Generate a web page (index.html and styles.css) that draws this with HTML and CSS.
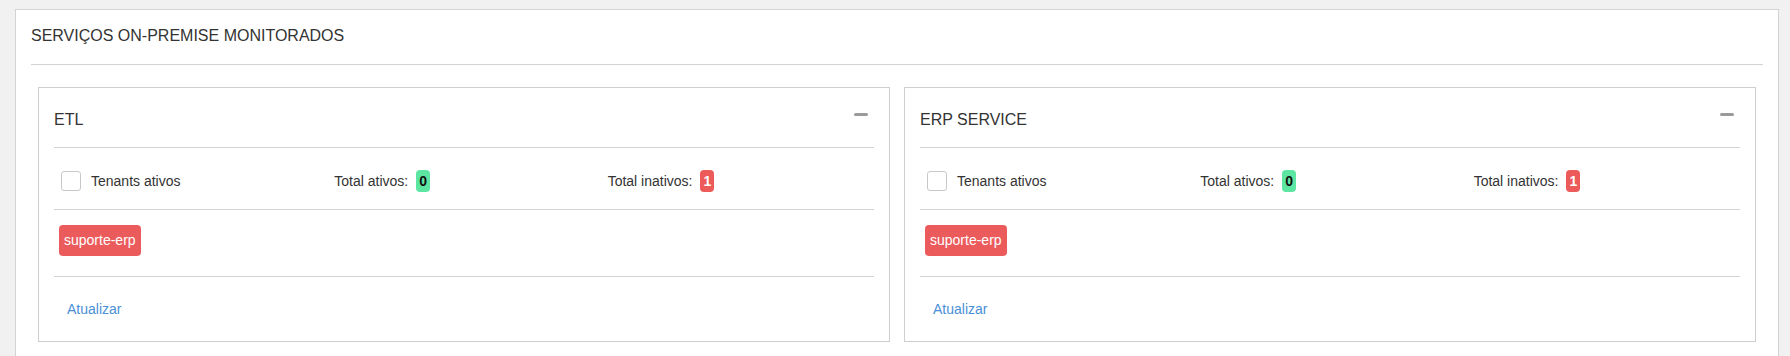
FILE: index.html
```html
<!DOCTYPE html>
<html lang="pt-BR">
<head>
<meta charset="utf-8">
<title>Serviços on-premise monitorados</title>
<link rel="stylesheet" href="styles.css">
</head>
<body>
<section class="panel">
  <header class="panel-header">SERVIÇOS ON-PREMISE MONITORADOS</header>
  <div class="cards">
    <article class="card">
      <div class="card-header">
        <h2 class="card-title">ETL</h2>
        <span class="collapse-btn" aria-label="Recolher"></span>
      </div>
      <div class="card-stats">
        <label class="stat-col"><span class="checkbox"></span><span class="check-label">Tenants ativos</span></label>
        <div class="stat-col">Total ativos:<span class="badge badge-green">0</span></div>
        <div class="stat-col">Total inativos:<span class="badge badge-red">1</span></div>
      </div>
      <div class="card-tags">
        <span class="tag">suporte-erp</span>
      </div>
      <div class="card-footer">
        <a class="link" href="#">Atualizar</a>
      </div>
    </article>
    <article class="card">
      <div class="card-header">
        <h2 class="card-title">ERP SERVICE</h2>
        <span class="collapse-btn" aria-label="Recolher"></span>
      </div>
      <div class="card-stats">
        <label class="stat-col"><span class="checkbox"></span><span class="check-label">Tenants ativos</span></label>
        <div class="stat-col">Total ativos:<span class="badge badge-green">0</span></div>
        <div class="stat-col">Total inativos:<span class="badge badge-red">1</span></div>
      </div>
      <div class="card-tags">
        <span class="tag">suporte-erp</span>
      </div>
      <div class="card-footer">
        <a class="link" href="#">Atualizar</a>
      </div>
    </article>
  </div>
</section>
</body>
</html>
```

FILE: styles.css
```css
* { box-sizing: border-box; }

html, body {
  margin: 0;
  padding: 0;
  background: #f1f1f1;
  font-family: "Liberation Sans", Arial, sans-serif;
  color: #333333;
  overflow: hidden;
}

.panel {
  margin: 9px 0 0 15px;
  width: 1764px;
  height: 400px;
  background: #ffffff;
  border: 1px solid #d3d3d3;
  padding: 0 15px;
}

.panel-header {
  font-size: 16px;
  line-height: 18px;
  padding: 17px 0 19px;
  border-bottom: 1px solid #d3d3d3;
}

.cards {
  display: flex;
  gap: 14px;
  padding: 0 7px;
  margin-top: 22px;
}

.card {
  flex: 1 1 0;
  border: 1px solid #cfcfcf;
  padding: 0 15px;
  background: #ffffff;
}

.card-header {
  display: flex;
  justify-content: space-between;
  align-items: flex-start;
  padding: 23px 0 18px;
  border-bottom: 1px solid #d3d3d3;
}

.card-title {
  margin: 0;
  font-size: 16px;
  line-height: 18px;
  font-weight: normal;
  color: #333333;
}

.collapse-btn {
  display: block;
  width: 14px;
  height: 3px;
  margin: 2px 6px 0 0;
  border-radius: 2px;
  background: #9a9a9a;
}

.card-stats {
  display: grid;
  grid-template-columns: repeat(3, 1fr);
  align-items: center;
  padding: 22px 0 17px;
  border-bottom: 1px solid #d3d3d3;
  font-size: 14px;
  line-height: 22px;
}

.stat-col {
  display: flex;
  align-items: center;
  padding-left: 7px;
}

.checkbox {
  display: block;
  width: 20px;
  height: 20px;
  border: 1px solid #c8c8c8;
  border-radius: 3px;
  background: #ffffff;
  margin-right: 10px;
}

.badge {
  display: inline-block;
  min-width: 14px;
  height: 22px;
  margin-left: 8px;
  padding: 0 3px;
  border-radius: 4px;
  font-size: 14px;
  font-weight: bold;
  line-height: 22px;
  text-align: center;
}

.badge-green {
  background: #5de6a2;
  color: #111111;
}

.badge-red {
  background: #ec5a5a;
  color: #ffffff;
}

.card-tags {
  padding: 15px 0 20px 5px;
  border-bottom: 1px solid #d3d3d3;
}

.tag {
  display: inline-block;
  height: 31px;
  padding: 0 5px;
  border-radius: 4px;
  background: #ec5b5b;
  color: #ffffff;
  font-size: 14px;
  line-height: 31px;
}

.card-footer {
  padding: 22px 0 22px 13px;
  font-size: 14px;
  line-height: 20px;
}

.link {
  color: #4a8fd6;
  text-decoration: none;
}
```
